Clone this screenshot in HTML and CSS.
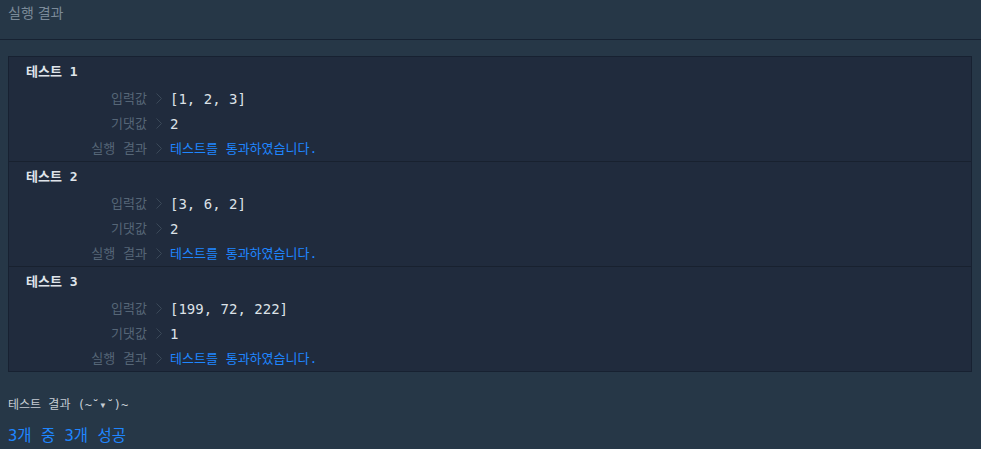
FILE: index.html
```html
<!DOCTYPE html>
<html lang="ko">
<head>
<meta charset="utf-8">
<title>실행 결과</title>
<link rel="stylesheet" href="styles.css">
</head>
<body>
<div class="panel">
  <div class="panel-header">실행 결과</div>
  <div class="panel-body">
    <div class="results">
      <section class="case">
        <div class="case-title">테스트 1</div>
        <div class="case-grid">
          <div class="label">입력값</div>
          <div class="chev"><svg width="6" height="11" viewBox="0 0 6 11"><polyline points="0.5,0.5 5.5,5.5 0.5,10.5" fill="none" stroke="currentColor" stroke-width="1"/></svg></div>
          <div class="value">[1, 2, 3]</div>
          <div class="label">기댓값</div>
          <div class="chev"><svg width="6" height="11" viewBox="0 0 6 11"><polyline points="0.5,0.5 5.5,5.5 0.5,10.5" fill="none" stroke="currentColor" stroke-width="1"/></svg></div>
          <div class="value">2</div>
          <div class="label">실행 결과</div>
          <div class="chev"><svg width="6" height="11" viewBox="0 0 6 11"><polyline points="0.5,0.5 5.5,5.5 0.5,10.5" fill="none" stroke="currentColor" stroke-width="1"/></svg></div>
          <div class="result">테스트를 통과하였습니다.</div>
        </div>
      </section>
      <section class="case">
        <div class="case-title">테스트 2</div>
        <div class="case-grid">
          <div class="label">입력값</div>
          <div class="chev"><svg width="6" height="11" viewBox="0 0 6 11"><polyline points="0.5,0.5 5.5,5.5 0.5,10.5" fill="none" stroke="currentColor" stroke-width="1"/></svg></div>
          <div class="value">[3, 6, 2]</div>
          <div class="label">기댓값</div>
          <div class="chev"><svg width="6" height="11" viewBox="0 0 6 11"><polyline points="0.5,0.5 5.5,5.5 0.5,10.5" fill="none" stroke="currentColor" stroke-width="1"/></svg></div>
          <div class="value">2</div>
          <div class="label">실행 결과</div>
          <div class="chev"><svg width="6" height="11" viewBox="0 0 6 11"><polyline points="0.5,0.5 5.5,5.5 0.5,10.5" fill="none" stroke="currentColor" stroke-width="1"/></svg></div>
          <div class="result">테스트를 통과하였습니다.</div>
        </div>
      </section>
      <section class="case">
        <div class="case-title">테스트 3</div>
        <div class="case-grid">
          <div class="label">입력값</div>
          <div class="chev"><svg width="6" height="11" viewBox="0 0 6 11"><polyline points="0.5,0.5 5.5,5.5 0.5,10.5" fill="none" stroke="currentColor" stroke-width="1"/></svg></div>
          <div class="value">[199, 72, 222]</div>
          <div class="label">기댓값</div>
          <div class="chev"><svg width="6" height="11" viewBox="0 0 6 11"><polyline points="0.5,0.5 5.5,5.5 0.5,10.5" fill="none" stroke="currentColor" stroke-width="1"/></svg></div>
          <div class="value">1</div>
          <div class="label">실행 결과</div>
          <div class="chev"><svg width="6" height="11" viewBox="0 0 6 11"><polyline points="0.5,0.5 5.5,5.5 0.5,10.5" fill="none" stroke="currentColor" stroke-width="1"/></svg></div>
          <div class="result">테스트를 통과하였습니다.</div>
        </div>
      </section>
    </div>
    <div class="summary-title">테스트 결과 (~˘▾˘)~</div>
    <div class="summary">3개 중 3개 성공</div>
  </div>
</div>
</body>
</html>
```
FILE: styles.css
```css
html, body {
  margin: 0;
  padding: 0;
  background: #263747;
}

.panel {
  width: 100%;
}

.panel-header {
  height: 40px;
  box-sizing: border-box;
  padding: 3px 8px 0;
  border-bottom: 1px solid #172232;
  font-family: "Noto Sans CJK KR", "Noto Sans", sans-serif;
  font-size: 14px;
  line-height: 18px;
  color: #7b8a99;
}

.panel-body {
  padding: 16px 9px 0 8px;
}

.results {
  background: #202b3d;
  border: 1px solid #172131;
}

.case {
  padding-top: 4px;
}

.case + .case {
  border-top: 1px solid #18212f;
}

.case-title {
  padding-left: 17px;
  font-family: "DejaVu Sans Mono", "Noto Sans CJK KR", monospace;
  font-size: 13px;
  font-weight: 600;
  line-height: 22px;
  color: #dfe4ea;
  margin-bottom: 3px;
}

.case-grid {
  display: grid;
  grid-template-columns: 138px 23px 1fr;
  grid-template-rows: repeat(3, 25px);
  align-items: center;
}

.label {
  text-align: right;
  font-family: "DejaVu Sans Mono", "Noto Sans CJK KR", monospace;
  font-size: 13px;
  line-height: 20px;
  color: #566677;
  white-space: pre;
}

.chev {
  display: flex;
  justify-content: center;
  align-items: center;
  color: #3a4858;
}

.chev svg {
  display: block;
}

.value {
  font-family: "DejaVu Sans Mono", monospace;
  font-size: 14px;
  line-height: 20px;
  color: #dde2e8;
}

.result {
  font-family: "DejaVu Sans Mono", "Noto Sans CJK KR", monospace;
  font-size: 13px;
  line-height: 20px;
  color: #1f86ff;
}

.summary-title {
  margin-top: 24px;
  font-family: "DejaVu Sans Mono", "Noto Sans CJK KR", monospace;
  font-size: 12px;
  line-height: 18px;
  color: #c5ccd3;
}

.summary {
  margin-top: 11px;
  font-family: "DejaVu Sans Mono", "Noto Sans CJK KR", monospace;
  font-size: 15.5px;
  line-height: 22px;
  color: #1f86ff;
}
```
